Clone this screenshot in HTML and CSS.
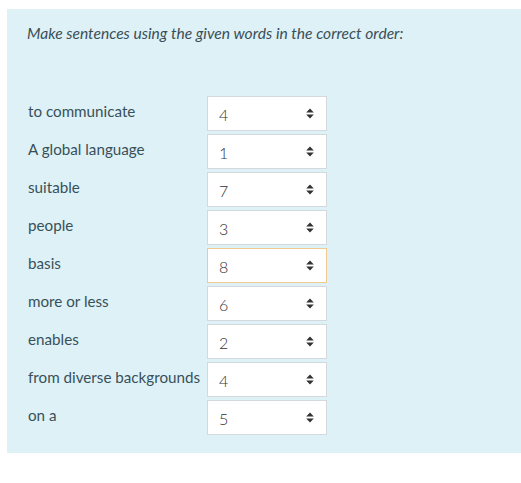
FILE: index.html
```html
<!DOCTYPE html>
<html>
<head>
<meta charset="utf-8">
<link rel="stylesheet" href="styles.css">
</head>
<body>
<div class="formulation">
  <p class="qtext">Make sentences using the given words in the correct order:</p>
  <div class="answers">
    <div class="label">to communicate</div>
    <div class="select"><span class="val">4</span><svg class="arrow" width="8" height="11" viewBox="0 0 8 11"><path d="M4 0.5 L7.8 4.5 L0.2 4.5 Z M0.2 6.5 L7.8 6.5 L4 10.5 Z" fill="#333"/></svg></div>
    <div class="label">A global language</div>
    <div class="select"><span class="val">1</span><svg class="arrow" width="8" height="11" viewBox="0 0 8 11"><path d="M4 0.5 L7.8 4.5 L0.2 4.5 Z M0.2 6.5 L7.8 6.5 L4 10.5 Z" fill="#333"/></svg></div>
    <div class="label">suitable</div>
    <div class="select"><span class="val">7</span><svg class="arrow" width="8" height="11" viewBox="0 0 8 11"><path d="M4 0.5 L7.8 4.5 L0.2 4.5 Z M0.2 6.5 L7.8 6.5 L4 10.5 Z" fill="#333"/></svg></div>
    <div class="label">people</div>
    <div class="select"><span class="val">3</span><svg class="arrow" width="8" height="11" viewBox="0 0 8 11"><path d="M4 0.5 L7.8 4.5 L0.2 4.5 Z M0.2 6.5 L7.8 6.5 L4 10.5 Z" fill="#333"/></svg></div>
    <div class="label">basis</div>
    <div class="select focus"><span class="val">8</span><svg class="arrow" width="8" height="11" viewBox="0 0 8 11"><path d="M4 0.5 L7.8 4.5 L0.2 4.5 Z M0.2 6.5 L7.8 6.5 L4 10.5 Z" fill="#333"/></svg></div>
    <div class="label">more or less</div>
    <div class="select"><span class="val">6</span><svg class="arrow" width="8" height="11" viewBox="0 0 8 11"><path d="M4 0.5 L7.8 4.5 L0.2 4.5 Z M0.2 6.5 L7.8 6.5 L4 10.5 Z" fill="#333"/></svg></div>
    <div class="label">enables</div>
    <div class="select"><span class="val">2</span><svg class="arrow" width="8" height="11" viewBox="0 0 8 11"><path d="M4 0.5 L7.8 4.5 L0.2 4.5 Z M0.2 6.5 L7.8 6.5 L4 10.5 Z" fill="#333"/></svg></div>
    <div class="label">from diverse backgrounds</div>
    <div class="select"><span class="val">4</span><svg class="arrow" width="8" height="11" viewBox="0 0 8 11"><path d="M4 0.5 L7.8 4.5 L0.2 4.5 Z M0.2 6.5 L7.8 6.5 L4 10.5 Z" fill="#333"/></svg></div>
    <div class="label">on a</div>
    <div class="select"><span class="val">5</span><svg class="arrow" width="8" height="11" viewBox="0 0 8 11"><path d="M4 0.5 L7.8 4.5 L0.2 4.5 Z M0.2 6.5 L7.8 6.5 L4 10.5 Z" fill="#333"/></svg></div>
  </div>
</div>
</body>
</html>
```
FILE: styles.css
```css
html, body {
  margin: 0;
  padding: 0;
  background: #ffffff;
}
body {
  padding: 9px 0 0 7px;
  font-family: Lato, "Open Sans", sans-serif;
  color: #2c4650;
}
.formulation {
  background: #def1f7;
  padding: 14px 20px 18px 20px;
  box-sizing: border-box;
  width: 514px;
  height: 444px;
}
.qtext {
  margin: 0;
  font-style: italic;
  font-size: 15.6px;
  line-height: 20px;
  color: #3a4f58;
}
.answers {
  margin-top: 53px;
  display: grid;
  grid-template-columns: 180px 120px;
  row-gap: 3px;
}
.label {
  font-size: 15.2px;
  line-height: 20px;
  padding-top: 5px;
  padding-left: 1px;
  color: #37505a;
}
.select {
  height: 35px;
  box-sizing: border-box;
  background: #ffffff;
  border: 1px solid #d4d9dd;
  display: flex;
  align-items: center;
  padding: 0 12px 0 11px;
}
.select.focus {
  border-color: #f3c98f;
}
.val {
  flex: 1;
  font-size: 16px;
  font-weight: 300;
  color: #333;
  padding-top: 1px;
}
.arrow {
  display: block;
}
```
